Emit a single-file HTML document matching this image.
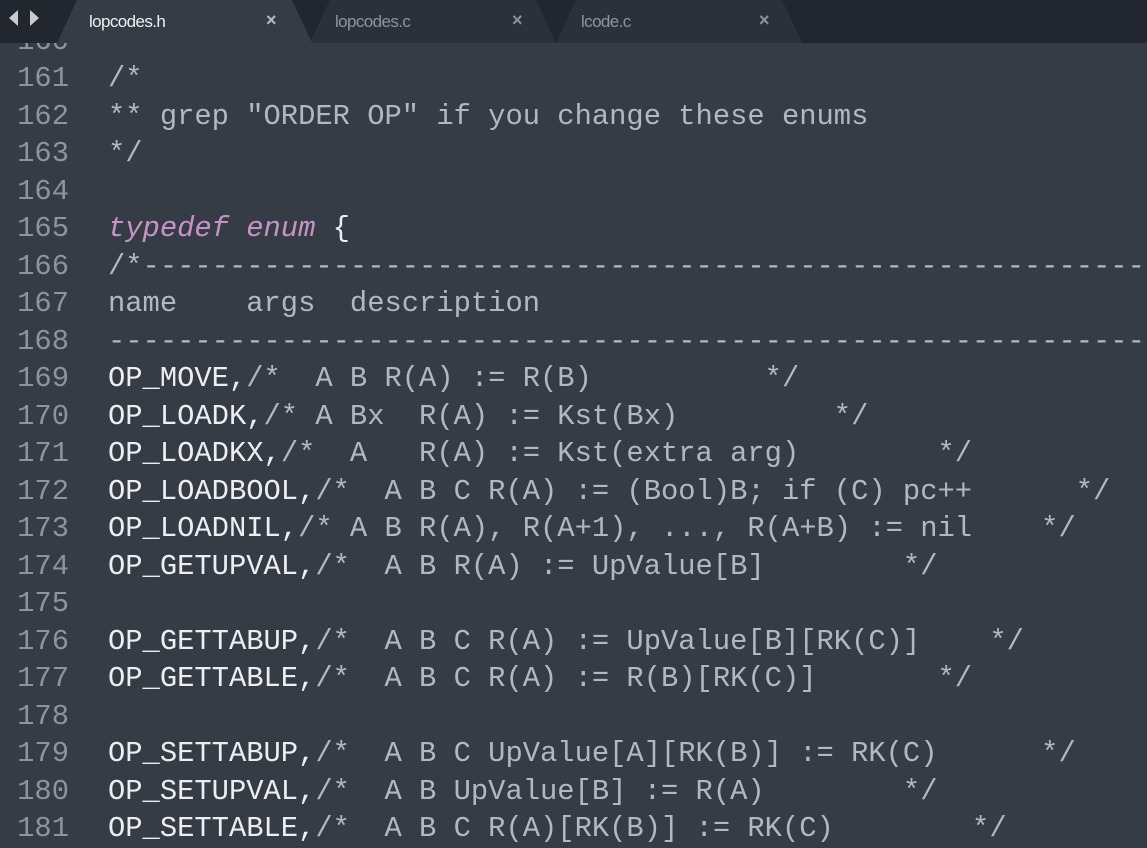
<!DOCTYPE html>
<html><head><meta charset="utf-8"><style>
html,body{margin:0;padding:0;width:1147px;height:839px;overflow:hidden;background:#363c45;}
#bar{position:absolute;left:0;top:0;width:1147px;height:43px;background:#22262e;z-index:2}
.tab{position:absolute;top:0;height:43px;font-family:"Liberation Sans",sans-serif;font-size:17px;letter-spacing:-0.6px}
.tab .bg{position:absolute;inset:0;clip-path:polygon(0 100%,20px 0,calc(100% - 20px) 0,100% 100%)}
.tab span{position:absolute;top:12px}
.tab .x{font-size:18px;font-weight:bold;top:10px}
#code{position:absolute;left:0;top:22.75px;font-family:"Liberation Mono",monospace;font-size:28.8px;line-height:37.5px;white-space:pre;color:#b3b8bf}
.ln{display:inline-block;width:69px;text-align:right;color:#8e949b;margin-right:39px}
.w{color:#eceef0}.k{color:#c594c5;font-style:italic}
</style></head><body>
<div id="bar">
 <svg style="position:absolute;left:9px;top:10px" width="32" height="16"><polygon points="0,8 9,0 9,16" fill="#c8ccd1"/><polygon points="30,8 21,0 21,16" fill="#c8ccd1"/></svg>
 <div class="tab" style="left:556px;width:246px"><div class="bg" style="background:#2c3139"></div><span style="left:25px;color:#8e949b">lcode.c</span><span class="x" style="left:203px;color:#8e949b">×</span></div>
 <div class="tab" style="left:310px;width:246px"><div class="bg" style="background:#2c3139"></div><span style="left:25px;color:#8e949b">lopcodes.c</span><span class="x" style="left:202px;color:#8e949b">×</span></div>
 <div class="tab" style="left:57px;width:255px"><div class="bg" style="background:#363c45"></div><span style="left:32px;color:#eef0f2">lopcodes.h</span><span class="x" style="left:209px;color:#b8bcc2">×</span></div>
</div>
<div id="code"><span class="ln">160</span>
<span class="ln">161</span>/*
<span class="ln">162</span>** grep "ORDER OP" if you change these enums
<span class="ln">163</span>*/
<span class="ln">164</span>
<span class="ln">165</span><span class="k">typedef</span> <span class="k">enum</span> <span class="w">{</span>
<span class="ln">166</span>/*------------------------------------------------------------
<span class="ln">167</span>name    args  description
<span class="ln">168</span>--------------------------------------------------------------
<span class="ln">169</span><span class="w">OP_MOVE,</span>/*  A B R(A) := R(B)          */
<span class="ln">170</span><span class="w">OP_LOADK,</span>/* A Bx  R(A) := Kst(Bx)         */
<span class="ln">171</span><span class="w">OP_LOADKX,</span>/*  A   R(A) := Kst(extra arg)        */
<span class="ln">172</span><span class="w">OP_LOADBOOL,</span>/*  A B C R(A) := (Bool)B; if (C) pc++      */
<span class="ln">173</span><span class="w">OP_LOADNIL,</span>/* A B R(A), R(A+1), ..., R(A+B) := nil    */
<span class="ln">174</span><span class="w">OP_GETUPVAL,</span>/*  A B R(A) := UpValue[B]        */
<span class="ln">175</span>
<span class="ln">176</span><span class="w">OP_GETTABUP,</span>/*  A B C R(A) := UpValue[B][RK(C)]    */
<span class="ln">177</span><span class="w">OP_GETTABLE,</span>/*  A B C R(A) := R(B)[RK(C)]       */
<span class="ln">178</span>
<span class="ln">179</span><span class="w">OP_SETTABUP,</span>/*  A B C UpValue[A][RK(B)] := RK(C)      */
<span class="ln">180</span><span class="w">OP_SETUPVAL,</span>/*  A B UpValue[B] := R(A)        */
<span class="ln">181</span><span class="w">OP_SETTABLE,</span>/*  A B C R(A)[RK(B)] := RK(C)        */
</div>
</body></html>
